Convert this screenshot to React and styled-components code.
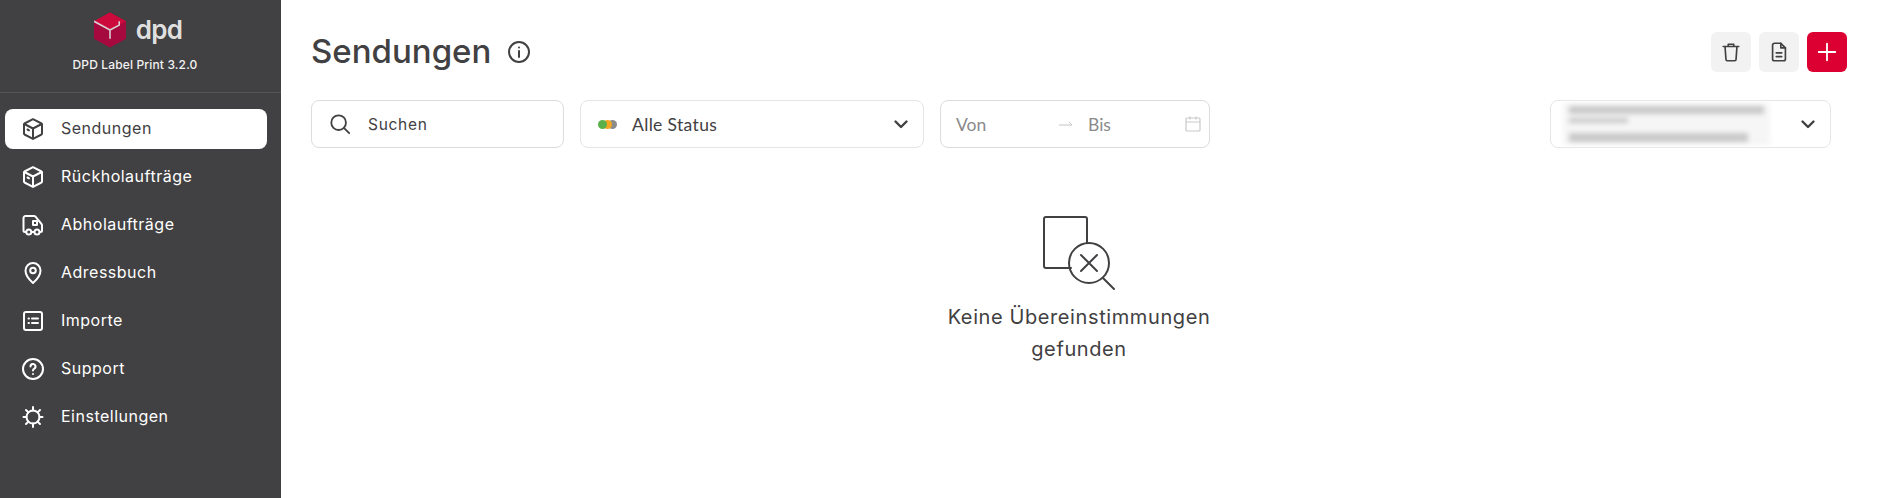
import React from "react";
import styled, { createGlobalStyle } from "styled-components";

const GlobalStyle = createGlobalStyle`
  html, body, #root { height: 100%; margin: 0; }
  body { font-family: Inter, "Noto Sans", sans-serif; background: #fff; color: #414042; }
  * { box-sizing: border-box; }
`;

const Shell = styled.div`
  display: flex;
  height: 498px;
  overflow: hidden;
`;

const Sidebar = styled.aside`
  width: 281px;
  flex: none;
  background: #414042;
  color: #fff;
`;

const Brand = styled.div`
  height: 93px;
  padding: 12px 11px 0 0;
  border-bottom: 1px solid #565557;
  display: flex;
  flex-direction: column;
  align-items: center;
`;

const LogoRow = styled.div`
  display: flex;
  align-items: center;
  gap: 10px;
  height: 36px;
  margin-left: 6px;
`;

const LogoWord = styled.span`
  font-size: 26px;
  font-weight: 600;
  letter-spacing: -0.8px;
  color: #dfdfdf;
  line-height: 36px;
`;

const Version = styled.div`
  margin-top: 9px;
  font-size: 12px;
  font-weight: 500;
  letter-spacing: 0.15px;
  color: #f2f2f2;
`;

const Nav = styled.nav`
  display: flex;
  flex-direction: column;
  padding: 16px 14px 0 5px;
  gap: 8px;
`;

const NavItem = styled.a`
  display: flex;
  align-items: center;
  height: 40px;
  padding-left: 16px;
  gap: 16px;
  border-radius: 8px;
  font-size: 16px;
  font-weight: 400;
  letter-spacing: 0.5px;
  color: ${(p) => (p.$active ? "#414042" : "#fff")};
  background: ${(p) => (p.$active ? "#fff" : "transparent")};
`;

const NavLabel = styled.span`
  margin-top: -2px;
`;

const Main = styled.main`
  flex: 1;
  min-width: 0;
  padding: 32px 41px 0 30px;
`;

const TitleRow = styled.header`
  display: flex;
  align-items: center;
  height: 40px;
`;

const Title = styled.h1`
  margin: 0 0 2px;
  font-size: 33px;
  font-weight: 500;
  color: #414042;
`;

const InfoIcon = styled.svg`
  margin-left: 16px;
`;

const Actions = styled.div`
  margin-left: auto;
  display: flex;
  gap: 8px;
`;

const ActionButton = styled.button`
  width: 40px;
  height: 40px;
  border: 0;
  padding: 0;
  border-radius: 6px;
  display: grid;
  place-items: center;
  background: ${(p) => (p.$primary ? "#dc0032" : "#f2f2f2")};
  color: ${(p) => (p.$primary ? "#fff" : "#414042")};
`;

const Filters = styled.div`
  display: flex;
  align-items: center;
  gap: 16px;
  margin-top: 28px;
`;

const Field = styled.div`
  display: flex;
  align-items: center;
  height: 48px;
  width: ${(p) => p.$width}px;
  padding: 0 ${(p) => p.$padRight || 10}px 0 ${(p) => p.$pad || 15}px;
  border: 1px solid ${(p) => p.$border || "#e6e6e6"};
  border-radius: 8px;
  background: #fff;
  font-family: Lato, sans-serif;
  font-size: 17.5px;
  color: #414042;
`;

const SearchText = styled.span`
  margin-left: 17px;
  font-family: Inter, sans-serif;
  font-size: 15.5px;
  letter-spacing: 0.7px;
`;

const StatusText = styled.span`
  margin-left: 15px;
  flex: 1;
  letter-spacing: 0.35px;
`;

const Dots = styled.span`
  display: flex;
  width: 19px;
`;

const Dot = styled.i`
  position: relative;
  width: 9px;
  height: 9px;
  border-radius: 50%;
  flex: none;
  background: ${(p) => p.$color};
  margin-left: ${(p) => (p.$first ? 0 : -4)}px;
  z-index: ${(p) => p.$z};
`;

const DatePart = styled.span`
  width: ${(p) => p.$width}px;
  margin-left: ${(p) => p.$left || 0}px;
  color: #8a8a8a;
`;

const RightField = styled(Field)`
  margin-left: auto;
  margin-right: 16px;
  justify-content: space-between;
`;

const Blurred = styled.div`
  width: 207px;
  height: 42px;
  padding: 3px 6px 0;
  background: #f6f6f6;
  filter: blur(2.5px);
`;

const BlurLine = styled.div`
  height: ${(p) => p.$h}px;
  width: ${(p) => p.$width}%;
  margin-bottom: ${(p) => p.$gap || 0}px;
  background: #c9c9c9;
`;

const Empty = styled.section`
  margin-top: 68px;
  display: flex;
  flex-direction: column;
  align-items: center;
`;

const EmptyIcon = styled.svg`
  margin-left: 3px;
`;

const EmptyText = styled.p`
  margin: 9px 0 0;
  width: 280px;
  text-align: center;
  font-size: 20px;
  font-weight: 400;
  letter-spacing: 0.6px;
  line-height: 32px;
  color: #414042;
`;

const Ico = ({ children, size = 24, sw = 2 }) => (
  <svg width={size} height={size} viewBox="0 0 24 24" fill="none" stroke="currentColor" strokeWidth={sw} strokeLinecap="round" strokeLinejoin="round">
    {children}
  </svg>
);

const Box = () => (
  <Ico>
    <path d="M12 2.200 20.500 6.500a1 1 0 0 1 .5.900v9.200a1 1 0 0 1-.5.900L12 21.800 3.500 17.500a1 1 0 0 1-.5-.900V7.400a1 1 0 0 1 .5-.900z" />
    <path d="M3.300 7 12 11.500 20.700 7M12 11.500v10" />
    <path d="M6.500 12.500l1.500.8" />
  </Ico>
);

const Truck = () => (
  <Ico>
    <path d="M4.500 19H4a1.500 1.500 0 0 1-1.500-1.500V5A2 2 0 0 1 4.500 3H13a2 2 0 0 1 1.500.7L20.500 11a2 2 0 0 1 .5 1.300v5.200A1.500 1.500 0 0 1 19.500 19H19" />
    <path d="M11 19h2M12 8h4v4h-4z" />
    <circle cx="7.800" cy="19" r="2.500" />
    <circle cx="16" cy="19" r="2.500" />
  </Ico>
);

const Pin = () => (
  <Ico>
    <path d="M12 22s-7.500-6.500-7.500-12.500a7.500 7.500 0 0 1 15 0C19.500 15.500 12 22 12 22z" />
    <circle cx="12" cy="9.500" r="2.800" />
  </Ico>
);

const ListBox = () => (
  <Ico>
    <rect x="3" y="3" width="18" height="18" rx="2" />
    <path d="M7.500 9.500h.5M7.500 14h.5M11 9.500h6M11 14h6" />
  </Ico>
);

const Help = () => (
  <Ico>
    <circle cx="12" cy="12" r="10" />
    <path d="M9.500 9.500a2.500 2.500 0 1 1 3.500 2.300c-.7.3-1 .8-1 1.700M12 17v.1" />
  </Ico>
);

const Gear = () => (
  <Ico>
    <circle cx="12" cy="12" r="6.500" />
    <path d="M12 2v3.500M12 18.500V22M2.500 12H5.500M18.500 12h3M5 5l2.400 2.400M16.600 16.600 19 19M5 19l2.400-2.400M16.600 7.400 19 5" />
  </Ico>
);

const Chevron = () => (
  <Ico sw={2.400}>
    <path d="M6.500 9.500l5.500 5.500 5.500-5.500" />
  </Ico>
);

const nav = [
  ["Sendungen", Box],
  ["Rückholaufträge", Box],
  ["Abholaufträge", Truck],
  ["Adressbuch", Pin],
  ["Importe", ListBox],
  ["Support", Help],
  ["Einstellungen", Gear],
];

export default function App() {
  return (
    <Shell>
      <GlobalStyle />
      <Sidebar>
        <Brand>
          <LogoRow>
            <svg width="32" height="36" viewBox="0 0 33 36">
              <path d="M16.500 0 33 9v18l-16.500 9L0 27V9z" fill="#a6093d" />
              <path d="M16.500 0 33 9l-16.500 9L0 9z" fill="#cc0a3c" />
              <path d="M0 9l16.500 9v9M16.500 18 26 13v-4" fill="none" stroke="#d9d4d6" strokeWidth="1.600" />
            </svg>
            <LogoWord>dpd</LogoWord>
          </LogoRow>
          <Version>DPD Label Print 3.2.0</Version>
        </Brand>
        <Nav>
          {nav.map(([label, Icon], i) => (
            <NavItem key={label} $active={i === 0}>
              <Icon />
              <NavLabel>{label}</NavLabel>
            </NavItem>
          ))}
        </Nav>
      </Sidebar>
      <Main>
        <TitleRow>
          <Title>Sendungen</Title>
          <InfoIcon width="24" height="24" viewBox="0 0 24 24" fill="none" stroke="#414042" strokeWidth="2" strokeLinecap="round">
            <circle cx="12" cy="12" r="10" />
            <path d="M12 11v6M12 7.500v.1" />
          </InfoIcon>
          <Actions>
            <ActionButton aria-label="Löschen">
              <Ico size={22} sw={1.800}>
                <path d="M3.500 6h17M9 6V3.500h6V6M5.500 6l1 14a1.500 1.500 0 0 0 1.500 1.500h8a1.500 1.500 0 0 0 1.500-1.500l1-14" />
              </Ico>
            </ActionButton>
            <ActionButton aria-label="Dokument">
              <Ico size={22} sw={1.800}>
                <path d="M14 2.500H7A2 2 0 0 0 5 4.500v15a2 2 0 0 0 2 2h10a2 2 0 0 0 2-2V7.500z" />
                <path d="M14 2.500v5h5M9 13h6M9 17h6" />
              </Ico>
            </ActionButton>
            <ActionButton $primary aria-label="Neu">
              <Ico size={22} sw={2}>
                <path d="M12 3v18M3 12h18" />
              </Ico>
            </ActionButton>
          </Actions>
        </TitleRow>
        <Filters>
          <Field $width={253} $pad={17} $border="#dcdcdc">
            <Ico size={22} sw={2}>
              <circle cx="10.500" cy="10.500" r="8" />
              <path d="M16.500 16.500 22 22" />
            </Ico>
            <SearchText>Suchen</SearchText>
          </Field>
          <Field $width={344} $pad={17}>
            <Dots>
              <Dot $color="#5cb04a" $first $z={3} />
              <Dot $color="#f5a623" $z={2} />
              <Dot $color="#8c8c8c" $z={1} />
            </Dots>
            <StatusText>Alle Status</StatusText>
            <Chevron />
          </Field>
          <Field $width={270} $border="#dcdcdc" $padRight={7}>
            <DatePart $width={102}>Von</DatePart>
            <svg width="16" height="8" viewBox="0 0 16 8" fill="none" stroke="#c4c4c4" strokeWidth="1">
              <path d="M1 5h13l-3-3" />
            </svg>
            <DatePart $width={96} $left={14}>Bis</DatePart>
            <svg width="18" height="18" viewBox="0 0 18 18" fill="none" stroke="#c9c9c9" strokeWidth="1.200">
              <rect x="2" y="3" width="14" height="13" rx="1" />
              <path d="M2 7h14M6 1.500v3M12 1.500v3" />
            </svg>
          </Field>
          <RightField $width={281} $pad={12}>
            <Blurred>
              <BlurLine $h={8} $width={100} $gap={4} />
              <BlurLine $h={5} $width={30} $gap={10} />
              <BlurLine $h={9} $width={92} />
            </Blurred>
            <Chevron />
          </RightField>
        </Filters>
        <Empty>
          <EmptyIcon width="76" height="76" viewBox="0 0 76 76" fill="none" stroke="#414042" strokeWidth="2" strokeLinecap="round" strokeLinejoin="round">
            <path d="M28 52H3a2 2 0 0 1-2-2V3a2 2 0 0 1 2-2h39a2 2 0 0 1 2 2v24" />
            <circle cx="46" cy="47" r="20" />
            <path d="M38 39l16 16M54 39 38 55M60 62l11 11" />
          </EmptyIcon>
          <EmptyText>Keine Übereinstimmungen gefunden</EmptyText>
        </Empty>
      </Main>
    </Shell>
  );
}
